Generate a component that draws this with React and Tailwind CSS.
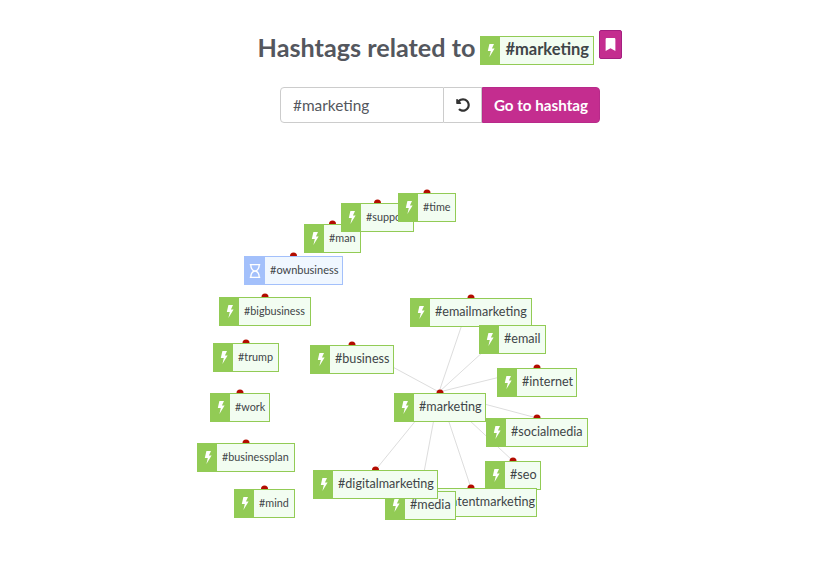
import React from "react";
import { FaBookmark, FaRegHourglass, FaUndoAlt } from "react-icons/fa";

const L = "text-[12.6px]";
const S = "text-[10.8px]";
const nodes = [
  { t: "#man", x: 304, y: 224, w: 57, s: S },
  { t: "#support", x: 341, y: 203, w: 73, s: S },
  { t: "#time", x: 398, y: 193, w: 58, s: S },
  { t: "#seo", x: 485, y: 461, w: 56, s: L, e: 1 },
  { t: "#contentmarketing", x: 405, y: 488, w: 132, s: L, e: 1 },
  { t: "#media", x: 385, y: 491, w: 71, s: L, e: 1 },
  { t: "#digitalmarketing", x: 313, y: 470, w: 125, s: L, e: 1 },
  { t: "#emailmarketing", x: 410, y: 298, w: 122, s: L, e: 1 },
  { t: "#email", x: 479, y: 325, w: 67, s: L, e: 1 },
  { t: "#internet", x: 497, y: 368, w: 80, s: L, e: 1 },
  { t: "#business", x: 310, y: 345, w: 84, s: L, e: 1 },
  { t: "#marketing", x: 394, y: 393, w: 92, s: L },
  { t: "#socialmedia", x: 486, y: 418, w: 102, s: L, e: 1 },
  { t: "#ownbusiness", x: 244, y: 256, w: 99, s: "text-[11px]", b: 1 },
  { t: "#bigbusiness", x: 219, y: 297, w: 92, s: S },
  { t: "#trump", x: 213, y: 343, w: 66, s: S },
  { t: "#work", x: 210, y: 393, w: 60, s: S },
  { t: "#businessplan", x: 197, y: 443, w: 98, s: S },
  { t: "#mind", x: 234, y: 489, w: 61, s: S },
];

function Bolt() {
  return (
    <svg width="8" height="13" viewBox="0 0 8 13" className="text-white" fill="currentColor">
      <path d="M2.4 0H7L4.9 4.6H7.6L2.4 13L3.8 6.9H0.8Z" />
    </svg>
  );
}

function Node({ n }) {
  const blue = n.b;
  return (
    <div
      className={`absolute flex items-stretch border ${blue ? "border-[#a3c0fb] bg-[#f0f7ff]" : "border-[#92cb55] bg-[#f2fdf1]"}`}
      style={{ left: n.x, top: n.y, width: n.w, height: 29 }}
    >
      <div
        className={`flex shrink-0 items-center justify-center ${blue ? "w-[20px] bg-[#a3c0fb]" : "w-[19px] bg-[#92cb55]"}`}
      >
        {blue ? <FaRegHourglass className="text-[14px] text-white" /> : <Bolt />}
      </div>
      <div className={`flex flex-1 items-center overflow-hidden whitespace-nowrap pb-[1px] pl-[5px] text-[#3f4548] ${n.s}`}>
        {n.t}
      </div>
    </div>
  );
}

export default function App() {
  const cx = 439;
  const cy = 392;
  return (
    <div className="relative h-[582px] w-[830px] overflow-hidden bg-white font-['Lato','Carlito','Liberation_Sans',sans-serif]">
      <div className="flex flex-col items-center pl-[50px] pt-[30px]">
        <div className="flex items-start">
          <h1 className="mr-[5px] text-[25.2px] font-bold leading-[34px] text-[#54575e]">
            Hashtags related to
          </h1>
          <div className="mt-[6px] flex h-[29px] w-[114px] border border-[#92cb55] bg-[#f2fdf1]">
            <div className="flex w-[19px] items-center justify-center bg-[#92cb55]">
              <Bolt />
            </div>
            <div className="flex flex-1 items-center pb-[2px] pl-[5px] text-[16.5px] font-bold text-[#3f4548]">
              #marketing
            </div>
          </div>
          <div className="ml-[5px] flex h-[29px] w-[23px] items-center justify-center rounded-[2px] border border-[#a51f80] bg-[#c42d8f]">
            <FaBookmark className="text-[13px] text-white" />
          </div>
        </div>
        <div className="mt-[22px] flex h-[36px]">
          <div className="flex w-[164px] items-center rounded-l-[4px] border border-[#ccc] bg-white pl-[12px] pt-[1px] text-[15.4px] text-[#54575e]">
            #marketing
          </div>
          <div className="flex w-[38px] items-center justify-center border-y border-r border-[#ccc] bg-white text-[#333]">
            <FaUndoAlt className="text-[14px]" />
          </div>
          <button className="w-[118px] rounded-r-[4px] border border-[#b82a8a] bg-[#c42d8f] text-[15.2px] font-bold text-white">
            Go to hashtag
          </button>
        </div>
      </div>

      <svg className="absolute left-0 top-0" width="830" height="582">
        {nodes.filter((n) => n.e).map((n) => (
          <line
            key={n.t}
            x1={cx}
            y1={cy}
            x2={n.x + n.w / 2}
            y2={n.y}
            stroke="#dddddd"
            strokeWidth="1"
          />
        ))}
        {nodes.map((n) => (
          <circle key={n.t} cx={n.x + n.w / 2} cy={n.y} r="3.5" fill="#b30c00" />
        ))}
      </svg>
      {nodes.map((n) => (
        <Node key={n.t} n={n} />
      ))}
    </div>
  );
}
